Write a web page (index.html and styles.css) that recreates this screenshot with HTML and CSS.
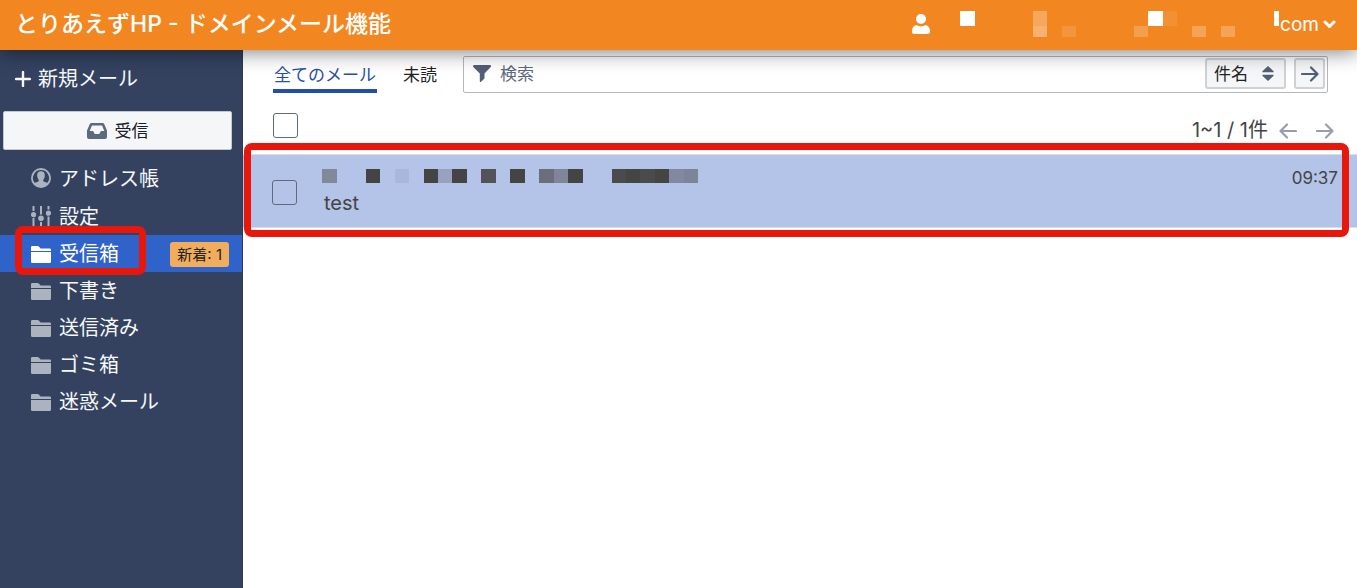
FILE: index.html
```html
<!DOCTYPE html>
<html lang="ja">
<head>
    <meta charset="UTF-8" />
    <meta name="viewport" content="width=device-width, initial-scale=1.0" />
    <title>とりあえずHP - ドメインメール機能</title>
    <link rel="stylesheet" href="styles.css">
</head>
<body>
    <!-- Shared icons -->
    <svg class="sprite" aria-hidden="true">
        <symbol id="folder" viewBox="0 0 20 17">
            <path d="M0 1.2Q0 0 1.2 0H6.5Q7.3 0 7.8.6L9.6 2.5H18.8Q20 2.5 20 3.7V4.9H0ZM0 6.1H20V15.8Q20 17 18.8 17H1.2Q0 17 0 15.8Z" />
        </symbol>
        <symbol id="arrow" viewBox="0 0 18 16">
            <path d="M1 8H16M10 1.5L16.5 8L10 14.5" fill="none" stroke="currentColor" stroke-width="2.2" stroke-linecap="round" stroke-linejoin="round" />
        </symbol>
    </svg>

    <header class="header">
        <h1 class="title">とりあえずHP - ドメインメール機能</h1>
        <button type="button" class="account" aria-label="アカウント">
            <svg class="icon-user" width="18" height="20" viewBox="0 0 18 20">
                <ellipse cx="9" cy="5" rx="5" ry="5" />
                <path d="M0 17.5C0 13 2.5 11.3 4.8 11.3Q9 13.5 13.2 11.3C15.5 11.3 18 13 18 17.5Q18 20 15.5 20H2.5Q0 20 0 17.5Z" />
            </svg>
            <svg class="masked-address" width="320" height="26" viewBox="0 0 320 26" shape-rendering="crispEdges">
                <rect x="0" y="0" width="15" height="15" />
                <rect x="73" y="0" width="14" height="15" opacity=".27" />
                <rect x="73" y="15" width="14" height="11" opacity=".36" />
                <rect x="102" y="15" width="14" height="11" opacity=".12" />
                <rect x="174" y="15" width="14" height="11" opacity=".2" />
                <rect x="188" y="0" width="15" height="15" />
                <rect x="203" y="0" width="14" height="15" opacity=".08" />
                <rect x="232" y="15" width="14" height="11" opacity=".24" />
                <rect x="261" y="15" width="14" height="11" opacity=".24" />
                <rect x="314" y="0" width="5" height="15" />
            </svg>
            <span>com</span>
            <svg class="icon-chevron" width="13" height="9" viewBox="0 0 13 9">
                <path d="M2 2L6.5 6.5L11 2" fill="none" stroke="currentColor" stroke-width="3" stroke-linecap="round" stroke-linejoin="round" />
            </svg>
        </button>
    </header>

    <div class="wrapper">
        <aside class="sidebar">
            <button type="button" class="compose">
                <svg width="16" height="16" viewBox="0 0 16 16"><path d="M8 1V15M1 8H15" stroke="currentColor" stroke-width="2.4" stroke-linecap="round" /></svg>
                <span>新規メール</span>
            </button>
            <button type="button" class="receive">
                <svg width="20" height="16" viewBox="0 0 20 16">
                    <path fill-rule="evenodd" d="M4.5 0H15.5Q16.7 0 17.2 1L20 7.5V14Q20 16 18 16H2Q0 16 0 14V7.5L2.8 1Q3.3 0 4.5 0ZM5 2.5L2.7 8H5.5Q6.3 8 6.6 8.8L7.2 10.2Q7.5 11 8.3 11H11.7Q12.5 11 12.8 10.2L13.4 8.8Q13.7 8 14.5 8H17.3L15 2.5Z" />
                </svg>
                <span>受信</span>
            </button>

            <nav>
                <ul class="menu tools">
                    <li><a href="#">
                        <svg width="20" height="20" viewBox="0 0 20 20">
                            <path fill-rule="evenodd" d="M10 0A10 10 0 1 1 10 20A10 10 0 1 1 10 0ZM10 2A8 8 0 0 0 3.6 14.8C5 14 7.3 13.8 7.8 12.9C8.2 12 6.7 11 6.3 8.8C5.8 5.5 7 3.3 10 3.3S14.2 5.5 13.7 8.8C13.3 11 11.8 12 12.2 12.9C12.7 13.8 15 14 16.4 14.8A8 8 0 0 0 10 2Z" />
                        </svg>
                        <span>アドレス帳</span></a></li>
                    <li><a href="#">
                        <svg width="20" height="20" viewBox="0 0 20 20">
                            <path d="M1.5 0H3.5V5H1.5ZM1.5 12H3.5V20H1.5ZM9 0H11V8.5H9ZM9 16H11V20H9ZM16.5 0H18.5V3.5H16.5ZM16.5 10.5H18.5V20H16.5Z" />
                            <circle cx="2.5" cy="8.7" r="2.6" /><circle cx="10" cy="12.2" r="2.8" /><circle cx="17.5" cy="7.2" r="2.6" />
                        </svg>
                        <span>設定</span></a></li>
                </ul>
                <ul class="menu folders">
                    <li class="active">
                        <a href="#"><svg width="20" height="17"><use href="#folder" /></svg><span>受信箱</span><span class="badge">新着: 1</span></a>
                        <span class="marker"></span>
                    </li>
                    <li><a href="#"><svg width="20" height="17"><use href="#folder" /></svg><span>下書き</span></a></li>
                    <li><a href="#"><svg width="20" height="17"><use href="#folder" /></svg><span>送信済み</span></a></li>
                    <li><a href="#"><svg width="20" height="17"><use href="#folder" /></svg><span>ゴミ箱</span></a></li>
                    <li><a href="#"><svg width="20" height="17"><use href="#folder" /></svg><span>迷惑メール</span></a></li>
                </ul>
            </nav>
        </aside>

        <main>
            <div class="filters">
                <div class="tabs">
                    <button type="button" class="tab selected">全てのメール</button>
                    <button type="button" class="tab">未読</button>
                </div>
                <form class="search">
                    <svg width="18" height="17" viewBox="0 0 18 17"><path d="M1 0H17Q18 0 18 1T17.5 2.2L11.5 8.5V13.5L8 16.7Q7 17.3 6.8 16V8.5L.5 2.2Q0 1.7 0 1T1 0Z" /></svg>
                    <input type="text" placeholder="検索" aria-label="検索">
                    <div class="sort">
                        <select aria-label="検索対象">
                            <option>件名</option>
                        </select>
                        <svg width="12" height="15" viewBox="0 0 12 15"><path d="M6 0L11.6 5.2Q12 6.3 11 6.3H1Q0 6.3 .4 5.2ZM6 15L11.6 9.8Q12 8.7 11 8.7H1Q0 8.7 .4 9.8Z" /></svg>
                    </div>
                    <button type="button" class="go" aria-label="検索する"><svg width="18" height="16"><use href="#arrow" /></svg></button>
                </form>
            </div>

            <div class="list-bar">
                <input type="checkbox" aria-label="全て選択">
                <div class="pager">
                    <span>1~1 / 1件</span>
                    <button type="button" class="prev" aria-label="前へ"><svg width="18" height="16"><use href="#arrow" /></svg></button>
                    <button type="button" aria-label="次へ"><svg width="18" height="16"><use href="#arrow" /></svg></button>
                </div>
            </div>

            <ul class="mails">
                <li class="mail">
                    <input type="checkbox" aria-label="メールを選択">
                    <a href="#" class="mail-body">
                        <svg class="sender" width="376" height="14" viewBox="0 0 376 14" shape-rendering="crispEdges">
                            <rect x="0" width="15" height="14" fill="#808899" />
                            <rect x="44" width="14" height="14" fill="#444444" />
                            <rect x="73" width="14" height="14" fill="#a8b7da" />
                            <rect x="102" width="14" height="14" fill="#444444" />
                            <rect x="116" width="14" height="14" fill="#98a2be" />
                            <rect x="130" width="15" height="14" fill="#444444" />
                            <rect x="159" width="15" height="14" fill="#525357" />
                            <rect x="188" width="15" height="14" fill="#444444" />
                            <rect x="217" width="15" height="14" fill="#6b6f7b" />
                            <rect x="232" width="14" height="14" fill="#80869a" />
                            <rect x="246" width="15" height="14" fill="#444444" />
                            <rect x="290" width="14" height="14" fill="#4a4b4d" />
                            <rect x="304" width="14" height="14" fill="#444644" />
                            <rect x="318" width="15" height="14" fill="#4a4b4d" />
                            <rect x="333" width="14" height="14" fill="#444644" />
                            <rect x="347" width="15" height="14" fill="#81889f" />
                            <rect x="362" width="14" height="14" fill="#7c8596" />
                        </svg>
                        <span class="subject">test</span>
                    </a>
                    <time>09:37</time>
                    <span class="marker"></span>
                </li>
            </ul>
        </main>
    </div>
</body>
</html>
```

FILE: styles.css
```css
/* Basic reset */
* {
    margin: 0;
    padding: 0;
    box-sizing: border-box;
}

body {
    display: flex;
    flex-direction: column;
    min-height: 100vh;
    font-family: Inter, "Noto Sans CJK JP", sans-serif;
    font-size: 17px;
    color: #222;
    background-color: #fff;
}

ul {
    list-style: none;
}

a {
    color: inherit;
    text-decoration: none;
}

button,
input,
select {
    font: inherit;
    color: inherit;
    background: none;
    border: none;
}

button {
    cursor: pointer;
}

svg {
    flex: none;
    fill: currentColor;
}

.sprite {
    position: absolute;
    width: 0;
    height: 0;
}

/* Header */
.header {
    position: relative;
    z-index: 2;
    display: flex;
    justify-content: space-between;
    align-items: center;
    height: 50px;
    padding: 0 21px 0 15px;
    color: #fff;
    background-color: #f28722;
    box-shadow: 0 2px 20px rgba(0, 0, 0, 0.5);
}

.title {
    font-size: 23px;
    font-weight: 500;
    line-height: 48px;
    padding-bottom: 2px;
}

.account {
    display: flex;
    align-items: center;
    padding-bottom: 2px;
    font-size: 19px;
}

.masked-address {
    margin-left: 30px;
}

.icon-chevron {
    margin-left: 4px;
}

/* Page below the header */
.wrapper {
    flex: 1;
    display: flex;
}

.sidebar {
    flex: none;
    width: 243px;
    color: #f5f8fa;
    background-color: #344260;
    border-right: 1px solid #2c3a58;
}

.compose {
    display: flex;
    align-items: center;
    gap: 7px;
    height: 56px;
    padding-left: 15px;
    font-size: 20px;
}

.compose span,
.receive span,
.menu a span:not(.badge) {
    padding-bottom: 2px;
}

.compose svg {
    margin-top: 2px;
}

.receive {
    display: flex;
    justify-content: center;
    align-items: center;
    gap: 8px;
    width: 229px;
    height: 39px;
    margin: 5px 0 9px 3px;
    color: #182026;
    background-color: #f5f6f8;
    border: 1px solid #c3c8d0;
    border-radius: 2px;
}

.receive svg {
    color: #5c6a7e;
}

/* Sidebar menu */
.menu li {
    position: relative;
}

.menu a {
    display: flex;
    align-items: center;
    gap: 8px;
    height: 37px;
    padding: 0 13px 0 31px;
    font-size: 20px;
}

.tools a {
    height: 38px;
}

.menu svg {
    color: #abb3bf;
}

.folders svg {
    margin-top: 2px;
}

.menu .active a {
    color: #fff;
    background-color: #3063c9;
}

.menu .active svg {
    color: #fff;
}

.badge {
    margin: 2px 0 0 auto;
    padding: 0 7px;
    font-size: 15px;
    line-height: 25px;
    color: #222;
    background-color: #f2ad5c;
    border-radius: 3px;
}

/* Red frame laid over an item */
.marker {
    position: absolute;
    inset: -9px 96px -3px 15px;
    border: 7px solid #e8170c;
    border-radius: 8px;
    pointer-events: none;
}

/* Main content */
main {
    flex: 1;
    min-width: 0;
}

.filters {
    display: flex;
    gap: 25px;
    padding: 6px 29px 0 30px;
}

.tabs {
    display: flex;
    gap: 25px;
}

.tab {
    height: 37px;
    padding: 2px 1px 0;
    border-bottom: 4px solid transparent;
}

.tab.selected {
    color: #244fa8;
    border-color: #244fa8;
}

.search {
    flex: 1;
    display: flex;
    align-items: center;
    min-width: 0;
    height: 37px;
    padding: 0 2px 2px 9px;
    border: 1px solid #b5b7ba;
    border-radius: 2px;
}

.search svg {
    color: #525f75;
}

.search input {
    flex: 1;
    min-width: 0;
    height: 33px;
    padding: 0 9px;
}

.search input::placeholder {
    color: #5c6a7e;
    opacity: 1;
}

.sort {
    position: relative;
    margin-right: 8px;
}

.sort select {
    appearance: none;
    width: 81px;
    height: 31px;
    padding: 0 7px;
    background-color: #f5f6f8;
    border: 2px solid #cfd1d4;
    border-radius: 3px;
}

/* Arrows over the drop-down */
.sort svg {
    position: absolute;
    top: 8px;
    right: 12px;
    pointer-events: none;
}

.go {
    display: flex;
    justify-content: center;
    align-items: center;
    width: 31px;
    height: 31px;
    background-color: #f5f6f8;
    border: 2px solid #cfd1d4;
    border-radius: 3px;
}

.list-bar {
    display: flex;
    justify-content: space-between;
    align-items: center;
    height: 61px;
    padding: 4px 23px 0 30px;
}

input[type="checkbox"] {
    appearance: none;
    flex: none;
    width: 25px;
    height: 25px;
    border: 1px solid #5f6b7c;
    border-radius: 3px;
}

.pager {
    display: flex;
    align-items: center;
    padding-top: 6px;
    font-size: 20px;
    color: #444;
}

.pager button {
    display: flex;
    margin-left: 19px;
    padding-top: 4px;
    color: #979fac;
}

.pager .prev {
    margin-left: 11px;
}

.pager .prev svg {
    transform: scaleX(-1);
}

/* Mail rows */
.mail {
    position: relative;
    display: flex;
    align-items: center;
    height: 74px;
    padding: 2px 19px 0 29px;
    color: #444;
    background-color: #b4c3e8;
    border-top: 1px solid #dcdcdc;
    border-bottom: 1px solid #dcdcdc;
}

.mail-body {
    flex: 1;
    display: flex;
    flex-direction: column;
    gap: 8px;
    margin-left: 25px;
}

.subject {
    padding-left: 2px;
    font-size: 20px;
    line-height: 24px;
}

.mail time {
    align-self: flex-start;
    padding-top: 9px;
    font-size: 17px;
    line-height: 24px;
}

.mail .marker {
    inset: -12px 8px -10px 1px;
}
```
